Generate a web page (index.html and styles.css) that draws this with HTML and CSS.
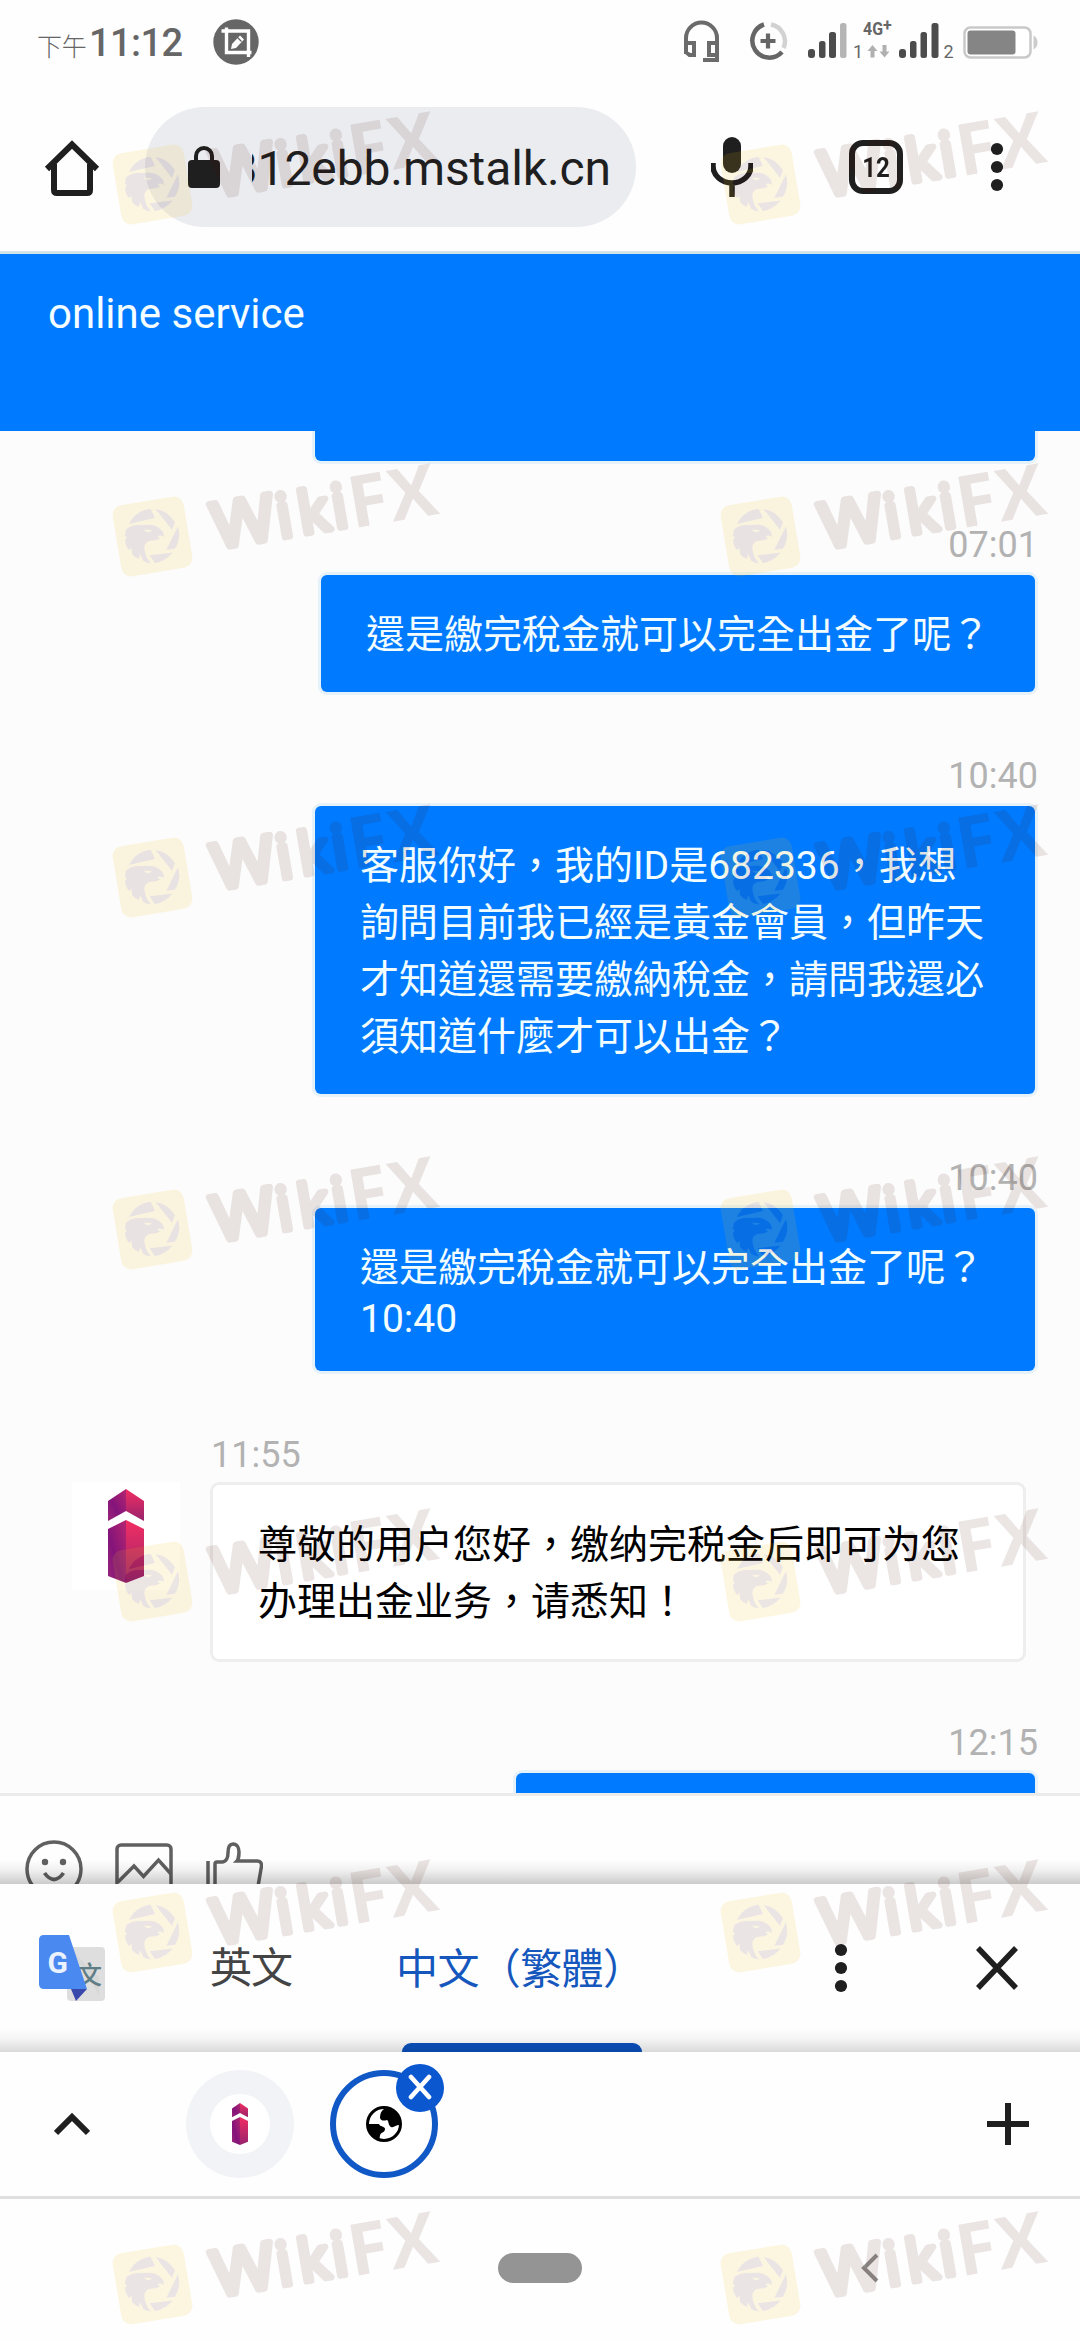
FILE: index.html
```html
<!DOCTYPE html>
<html lang="zh-TW">
<head>
<meta charset="utf-8">
<title>online service</title>
<link rel="stylesheet" href="styles.css">
</head>
<body>
<div class="screen">
  <header class="status">
    <span class="ampm">下午</span><span class="clock">11:12</span>
    <svg class="shot" width="46" height="46" viewBox="0 0 46 46"><circle cx="23" cy="23" r="22.7" fill="#666"/><g fill="none" stroke="#fff" stroke-width="3.4"><path d="M8.500 12H35.500V38M13.500 8.500V33.500H38.500"/></g><path d="M18 30l1-5 8-8.500 4 4-8 8.500z" fill="#fff"/><path d="M24.500 18.500l4 4" stroke="#666" stroke-width="1.300"/></svg>
    <div class="indicators">
      <svg width="396" height="60" viewBox="684 12 396 60">
        <g fill="none" stroke="#6b6b6b" stroke-width="4"><path d="M686 54V38a15.500 15.500 0 0 1 31 0v22h-14"/><path d="M686 43h8v12h-4.500l-3.500-3zM717 43h-8v12h8"/></g>
        <path d="M764 24.500A17 17 0 1 0 782 52" fill="none" stroke="#666" stroke-width="4.500"/>
        <path d="M771 24.500A17 17 0 0 1 783.500 48" fill="none" stroke="#d2d2d2" stroke-width="4.500"/>
        <path d="M768 33.500v15M760.500 41h15" stroke="#666" stroke-width="4.200"/>
        <g fill="#4c4c4c"><rect x="808" y="49" width="7" height="9" rx="3"/><rect x="819" y="41" width="6.500" height="17" rx="2.500"/><rect x="829" y="32" width="7" height="26" rx="2.500"/><rect x="899" y="49" width="7" height="9" rx="3"/><rect x="910" y="41" width="6.500" height="17" rx="2.500"/><rect x="920.500" y="32" width="6.500" height="26" rx="2.500"/><rect x="931.500" y="23" width="7" height="35" rx="2.500"/></g>
        <rect x="840" y="23" width="6.500" height="35" rx="2.500" fill="#b5b5b5"/>
        <text x="863" y="34.500" font-size="19" font-weight="700" fill="#666" textLength="20" lengthAdjust="spacingAndGlyphs">4G</text>
        <text x="883" y="31" font-size="16" font-weight="700" fill="#666">+</text>
        <text x="853" y="58" font-size="18" fill="#666">1</text><text x="943.500" y="58" font-size="18" fill="#666">2</text>
        <path d="M867.500 51l5-6 5 6h-3v6.500h-4V51zM879.500 51.500l5 6 5-6h-3V45h-4v6.500z" fill="#b0b0b0"/>
        <rect x="964.500" y="27.500" width="66" height="30" rx="6" fill="#fff" stroke="#c9c9c9" stroke-width="2.500"/>
        <rect x="967.500" y="30.500" width="48" height="24" rx="3" fill="#858585"/><path d="M1033.500 35.500q4 2 4 7t-4 7z" fill="#ccc"/>
      </svg>
    </div>
  </header>

  <div class="toolbar">
    <svg class="home" width="56" height="58" viewBox="0 0 56 58"><path d="M3 30L28 5.500 53 30" fill="none" stroke="#1f1f1f" stroke-width="6"/><path d="M10 25v26q0 3 3 3h30q3 0 3-3V25" fill="none" stroke="#1f1f1f" stroke-width="6"/></svg>
    <div class="omnibox">
      <svg width="32" height="42" viewBox="0 0 32 42"><rect y="14" width="32" height="28" rx="4" fill="#1f1f1f"/><path d="M8 16V10a8 8 0 0 1 16 0v6" fill="none" stroke="#1f1f1f" stroke-width="4"/></svg>
      <div class="url"><span>312ebb.mstalk.cn</span></div>
    </div>
    <svg class="mic" width="42" height="62" viewBox="0 0 42 62"><rect x="12" y="1" width="18" height="36" rx="9" fill="#1f1f1f"/><path d="M2 27v3a19 17 0 0 0 38 0v-3M21 46v15" fill="none" stroke="#1f1f1f" stroke-width="5.500"/></svg>
    <div class="tabs"><span>12</span></div>
    <svg class="more" width="14" height="50" viewBox="0 0 14 50"><g fill="#1f1f1f"><circle cx="7" cy="7" r="6.100"/><circle cx="7" cy="25" r="6.100"/><circle cx="7" cy="43" r="6.100"/></g></svg>
  </div>

  <div class="title">online service</div>

  <main class="chat">
    <div class="bubble mine cut"></div>
    <div class="message right"><time>07:01</time><div class="bubble mine">還是繳完稅金就可以完全出金了呢？</div></div>
    <div class="message right"><time>10:40</time><div class="bubble mine wide">客服你好，我的ID是682336，我想<br>詢問目前我已經是黃金會員，但昨天<br>才知道還需要繳納稅金，請問我還必<br>須知道什麼才可以出金？</div></div>
    <div class="message right"><time>10:40</time><div class="bubble mine wide">還是繳完稅金就可以完全出金了呢？<div class="sent">10:40</div></div></div>
    <div class="message left">
      <div class="avatar"><svg width="36" height="94" viewBox="0 0 36 94"><defs>
        <linearGradient id="l" x1="1" y1="0" x2="0" y2="1"><stop stop-color="#b52570"/><stop offset=".6" stop-color="#83147a"/><stop offset="1" stop-color="#9b2578"/></linearGradient>
        <linearGradient id="r" x1="0" y1="0" x2="0" y2="1"><stop stop-color="#f22e62"/><stop offset="1" stop-color="#98236d"/></linearGradient></defs>
        <g id="brand"><path d="M0 12L18 0V22L0 32z" fill="url(#l)"/><path d="M36 12L18 0V22L36 32z" fill="url(#r)"/><path d="M0 40L18 31V94L0 87z" fill="url(#l)"/><path d="M36 40L18 31V94L36 87z" fill="url(#r)"/></g></svg></div>
      <div class="content"><time>11:55</time><div class="bubble agent">尊敬的用户您好，缴纳完税金后即可为您<br>办理出金业务，请悉知！</div></div>
    </div>
    <div class="message right"><time>12:15</time><div class="bubble mine last"></div></div>
  </main>

  <div class="composer">
    <svg width="58" height="58" viewBox="0 0 58 58"><circle cx="29" cy="29" r="27" fill="none" stroke="#606060" stroke-width="3.500"/><circle cx="20" cy="22" r="3.200" fill="#606060"/><circle cx="38" cy="22" r="3.200" fill="#606060"/><path d="M19.500 33q9.500 13 19 0" fill="none" stroke="#606060" stroke-width="3.800"/></svg>
    <svg width="58" height="58" viewBox="0 0 58 58"><g fill="none" stroke="#606060" stroke-width="3.500"><rect x="2" y="5" width="54" height="52" rx="4"/><path d="M3 42L19 26l9.500 10.500L43.500 20 56 34"/></g></svg>
    <svg width="58" height="58" viewBox="0 0 58 58"><g fill="none" stroke="#606060" stroke-width="3.500"><path d="M3 21v37M10 58V24q0-2 2-2h5c4 0 6-4 6-9 0-6 2-9 5-9 4 0 6 4 6 8 0 3-1 8-2 9h20q6 0 4 8l-5 29"/></g></svg>
  </div>

  <div class="translate">
    <svg class="gt" width="66" height="68" viewBox="0 0 66 68"><rect x="28" y="13" width="38" height="54" rx="4" fill="#dedede"/><path d="M34 18L60 43v18z" fill="#cfcfcf" opacity=".5"/><text x="38" y="50" font-size="25" font-weight="500" fill="#607d86">文</text><path d="M32 55h16L37 67z" fill="#3949ab"/><path d="M5 1H30L48 55H5q-5 0-5-5V6q0-5 5-5z" fill="#4a89f0"/><text x="8.500" y="38.500" font-size="30" font-weight="700" fill="#eaf2ff">G</text></svg>
    <span class="lang">英文</span>
    <div class="chosen"><span>中文（繁體）</span></div>
    <svg class="dots" width="14" height="50" viewBox="0 0 14 50"><g fill="#1f1f1f"><circle cx="7" cy="7" r="6.100"/><circle cx="7" cy="25" r="6.100"/><circle cx="7" cy="43" r="6.100"/></g></svg>
    <svg class="close" width="42" height="44" viewBox="0 0 42 44"><path d="M2 2L40 42M40 2L2 42" stroke="#1f1f1f" stroke-width="5.500"/></svg>
  </div>

  <div class="strip">
    <svg class="up" width="36" height="24" viewBox="0 0 36 24"><path d="M2 21L18 5l16 16" fill="none" stroke="#1f1f1f" stroke-width="6"/></svg>
    <div class="tab"><div class="favicon"><svg width="16" height="42" viewBox="0 0 36 94"><use href="#brand"/></svg></div></div>
    <div class="tab current">
      <svg width="36" height="36" viewBox="0 0 36 36"><circle cx="18" cy="18" r="16.500" fill="#fff" stroke="#000" stroke-width="3"/><path d="M18 3c-3 2-4 5-4 9 1 3 4 3 7 2 2 1 1 5 4 7 3 1 5-2 8-2V13C30 6 25 2 18 3zM2 18h11c1 3 6 2 6 5 0 4-5 3-5 7l-1 4C6 31 3 25 2 18z"/></svg>
      <div class="badge"><svg width="24" height="26" viewBox="0 0 24 26"><path d="M3 3l18 20M21 3L3 23" stroke="#fff" stroke-width="4.600" stroke-linecap="round"/></svg></div>
    </div>
    <svg class="plus" width="42" height="42" viewBox="0 0 42 42"><path d="M21 0v42M0 21h42" stroke="#1f1f1f" stroke-width="6"/></svg>
  </div>

  <nav class="system">
    <div class="pill"></div>
    <svg class="back" width="18" height="30" viewBox="0 0 18 30"><path d="M16 2L3 15l13 13" fill="none" stroke="#8f8f8f" stroke-width="4"/></svg>
  </nav>

  <svg class="watermarks" width="1080" height="2340" viewBox="0 0 1080 2340">
    <defs>
    <g id="eagle">
        <path d="M17 28A27.500 27.500 0 0 1 38.700 12.700L43 22zM43.500 13A27.500 27.500 0 0 1 63 26.300L60 34zM66 30.300A27.500 27.500 0 0 1 63 52.700L54.300 53.700zM60.500 56.500A27.500 27.500 0 0 1 43 67L37.500 59.300z"/>
        <path fill-rule="evenodd" d="M14 33.500C18 30 22 29 25 29L37 28.700C43 28.500 49 32 51.500 37L52 41Q49 38.500 45.500 40L48 42.500Q44 44.500 42 44.500C35 44 32 48 32.500 53C33 59 36 64 39 67.500Q35 67 31.300 65L28 58 27 63Q22 61 20 58L19.500 52 17 54Q13.500 50 13 44L15 41 12.700 40zM32 33.500Q35 38 40 34.500L38 34z"/>
    </g>
    <mask id="cutout"><rect x="-10" y="-10" width="100" height="100" fill="#fff"/><use href="#eagle" fill="#000"/></mask>
    <g id="mark">
      <g mask="url(#cutout)"><rect x="4.500" y="4.500" width="72" height="72" rx="10" transform="rotate(-9.500 40.500 40.500)" fill="#f2c21a" opacity=".125"/></g>
      <use href="#eagle" fill="#460a08" opacity=".1"/>
      <g transform="translate(103.500 56) rotate(-9.700)" opacity=".1" fill="#460a00" stroke="#460a00">
        <text class="round" x="1" y="-3" font-size="63" textLength="63" lengthAdjust="spacingAndGlyphs">W</text>
        <text class="round" x="66" y="-3" font-size="60">i</text><text class="round" x="88" y="-3" font-size="58">k</text><text class="round" x="122" y="-3" font-size="60">i</text>
        <text class="block" x="139" y="0" font-size="72" textLength="40" lengthAdjust="spacingAndGlyphs">F</text><text class="block" x="180" y="0" font-size="72" textLength="48" lengthAdjust="spacingAndGlyphs">X</text>
      </g>
    </g></defs>
    <g><use href="#mark" x="112" y="144"/><use href="#mark" x="720" y="144"/><use href="#mark" x="112" y="496"/><use href="#mark" x="720" y="496"/><use href="#mark" x="112" y="837"/><use href="#mark" x="720" y="837"/><use href="#mark" x="112" y="1189"/><use href="#mark" x="720" y="1189"/><use href="#mark" x="112" y="1541"/><use href="#mark" x="720" y="1541"/><use href="#mark" x="112" y="1892"/><use href="#mark" x="720" y="1892"/><use href="#mark" x="112" y="2244"/><use href="#mark" x="720" y="2244"/></g>
  </svg>
</div>
</body>
</html>
```
FILE: styles.css
```css
* { box-sizing: border-box; }
body { margin: 0; background: #fefefe; font-family: Roboto, "Noto Sans CJK TC", sans-serif; }
svg { display: block; flex: none; }
.screen { position: relative; width: 1080px; height: 2340px; overflow: hidden; display: flex; flex-direction: column; }
.screen > * { flex: none; }

.status { height: 84px; display: flex; align-items: center; padding-left: 37px; color: #666; }
.ampm { font-size: 25px; font-weight: 300; padding-top: 5px; width: 52px; white-space: nowrap; letter-spacing: -0.3px; }
.clock { font-size: 38px; font-weight: 500; line-height: 42px; width: 124px; letter-spacing: -0.6px; padding-top: 1px; }
.shot { margin-top: -1px; }
.indicators { margin-left: auto; }

.toolbar { height: 170px; display: flex; align-items: flex-start; padding: 23px 0 0 44px; border-bottom: 3px solid #d3e4ea; color: #1f1f1f; }
.home { margin-top: 32px; }
.omnibox { margin-left: 45px; width: 491px; height: 120px; border-radius: 60px; background: #ebecf0; display: flex; align-items: center; padding-left: 43px; }
.url { margin-left: 32px; width: 359px; overflow: hidden; display: flex; justify-content: flex-end; font-size: 48px; line-height: 60px; letter-spacing: -0.1px; padding-top: 4px; }
.mic { margin: 29px 0 0 75px; }
.tabs { margin: 33px 0 0 96px; width: 54px; height: 54px; border: 6px solid #1f1f1f; border-radius: 14px; display: flex; justify-content: center; align-items: center; font-size: 28px; font-weight: 700; }
.tabs span { transform: scaleX(.86); }
.more { margin: 35px 0 0 87px; }

.title { height: 177px; background: #007aff; color: #f4fdff; font-size: 42px; line-height: 50px; padding: 35px 0 0 48px; }

.chat { height: 1362px; background: #fcfcfc; overflow: hidden; display: flex; flex-direction: column; padding-right: 45px; }
.chat > * { flex: none; }
.message { margin-top: 63px; display: flex; }
.right { flex-direction: column; align-items: flex-end; }
time { display: block; height: 42px; line-height: 42px; margin-bottom: 9px; font-size: 36px; color: #b2b2b2; }
.right time { margin-right: -3px; }
.bubble { border-radius: 6px; padding: 32px 45px 28px; font-size: 39px; line-height: 57px; white-space: nowrap; }
.mine { background: #007aff; color: #f2fdff; box-shadow: 0 0 0 3px #e6f2f9; }
.wide { width: 720px; }
.cut { width: 720px; height: 30px; padding: 0; align-self: flex-end; border-radius: 0 0 6px 6px; }
.sent { line-height: 46px; margin: -1px 0 1px; }
.left { padding-left: 72px; }
.left time { margin-left: -2px; }
.avatar { width: 108px; height: 108px; background: #fff; margin: 48px 33px 0 0; display: flex; justify-content: center; padding-top: 7px; }
.agent { width: 810px; background: #fff; color: #000; box-shadow: 0 0 0 3px #eee; }
.last { width: 519px; height: 60px; }

.composer { height: 91px; border-top: 3px solid #ebebeb; display: flex; gap: 32px; padding: 44px 0 0 25px; overflow: hidden; }

.translate { position: relative; height: 168px; background: #fefefe; display: flex; align-items: center; padding-left: 39px; font-size: 42px; color: #444; }
.translate::before, .translate::after { content: ""; position: absolute; left: 0; right: 0; height: 24px; }
.translate::before { top: -24px; background: linear-gradient(transparent, rgba(0,0,0,.06) 45%, rgba(0,0,0,.2)); }
.translate::after { bottom: 0; background: linear-gradient(transparent, rgba(0,0,0,.04) 45%, rgba(0,0,0,.14)); }
.lang { margin: 2px 0 0 105px; width: 187px; letter-spacing: -1px; line-height: 60px; }
.chosen { width: 240px; height: 168px; color: #1557bd; display: flex; flex-direction: column; justify-content: space-between; white-space: nowrap; letter-spacing: -0.6px; line-height: 60px; }
.chosen::before { content: ""; height: 12px; }
.chosen::after { content: ""; height: 9px; margin-left: 5px; width: 240px; background: #0b52c2; border-radius: 9px 9px 0 0; }
.chosen span { margin-left: -1px; }
.dots { margin-left: 197px; }
.close { margin-left: 128px; }

.strip { height: 147px; border-bottom: 3px solid #dfdfdf; display: flex; align-items: center; padding-left: 54px; }
.tab { width: 108px; height: 108px; border-radius: 50%; background: #f2f3f6; margin-left: 96px; display: flex; align-items: center; justify-content: center; }
.favicon { width: 60px; height: 60px; border-radius: 50%; background: #fff; display: flex; align-items: center; justify-content: center; }
.current { position: relative; margin-left: 36px; background: #fff; border: 6px solid #1158c7; }
.badge { position: absolute; left: 60px; top: -12px; width: 48px; height: 48px; border-radius: 50%; background: #0b57d0; display: flex; align-items: center; justify-content: center; padding-bottom: 2px; }
.plus { margin-left: 549px; }

.system { height: 141px; display: flex; align-items: center; padding: 0 0 3px 498px; }
.pill { width: 84px; height: 30px; border-radius: 15px; background: #949494; }
.back { margin-left: 279px; }

.watermarks { position: absolute; left: 0; top: 0; pointer-events: none; }
.round { font-family: "Open Sans", sans-serif; stroke-width: 6.5px; stroke-linejoin: round; }
.block { font-family: "Open Sans", sans-serif; font-weight: 700; stroke: none; }
```
